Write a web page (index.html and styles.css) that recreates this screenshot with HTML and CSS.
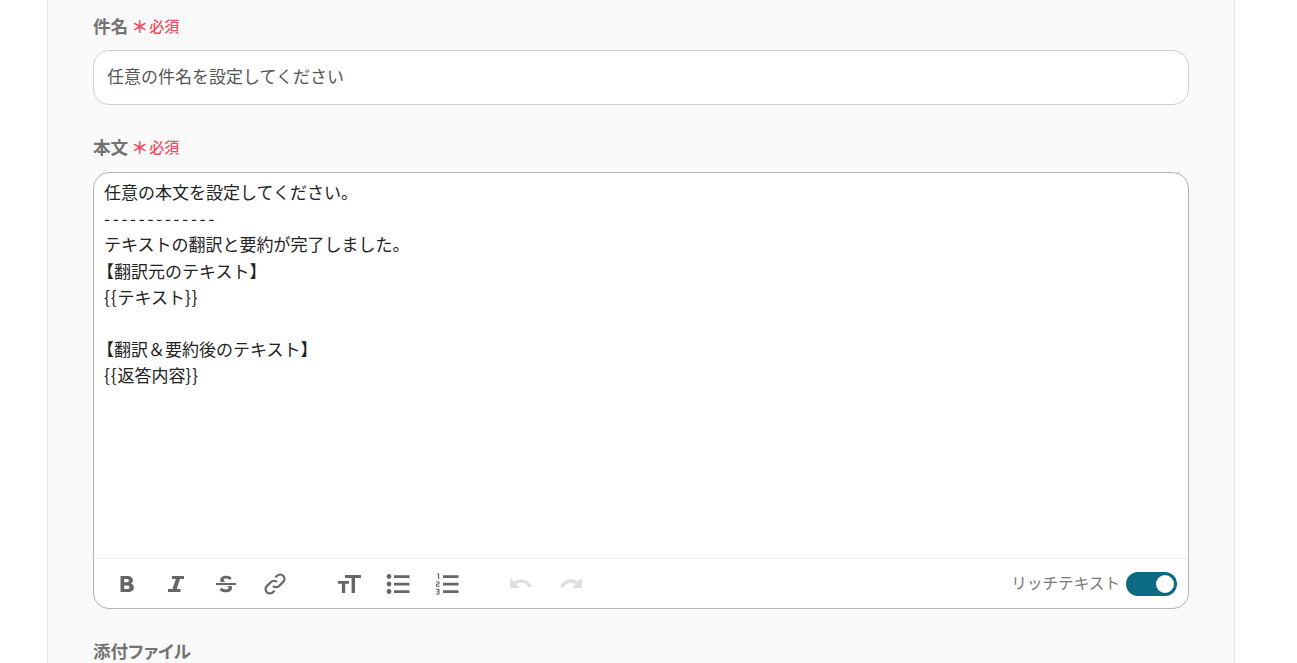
FILE: index.html
```html
<!DOCTYPE html>
<html lang="ja">
<head>
  <meta charset="UTF-8">
  <meta name="viewport" content="width=device-width, initial-scale=1.0">
  <title>メール設定</title>
  <link rel="stylesheet" href="styles.css">
</head>

<body>
  <div class="panel">
    <div class="field field-subject">
      <div class="label">
        <span class="label-name">件名</span>
        <span class="label-mark">＊</span>
        <span class="label-required">必須</span>
      </div>
      <div class="input-box">任意の件名を設定してください</div>
    </div>

    <div class="field field-body">
      <div class="label">
        <span class="label-name">本文</span>
        <span class="label-mark">＊</span>
        <span class="label-required">必須</span>
      </div>
      <div class="editor">
        <div class="editor-text">
          <p>任意の本文を設定してください。</p>
          <p class="dashes">-------------</p>
          <p>テキストの翻訳と要約が完了しました。</p>
          <p class="bracket">【翻訳元のテキスト】</p>
          <p><span class="brace">{{</span>テキスト<span class="brace">}}</span></p>
          <p>&nbsp;</p>
          <p class="bracket">【翻訳＆要約後のテキスト】</p>
          <p><span class="brace">{{</span>返答内容<span class="brace">}}</span></p>
        </div>
        <div class="toolbar">
          <div class="tool-group">
            <svg class="tool" viewBox="0 0 24 24"><path d="M5.500 4h7.200c3.200 0 5.200 1.700 5.200 4.200 0 1.500-.8 2.700-2 3.300 1.800.6 3 2.100 3 4 0 2.800-2.200 4.500-5.500 4.500H5.500zm3.700 6.300h2.700c1.300 0 2-.6 2-1.700s-.7-1.700-2-1.700H9.200zm0 6.800h3.100c1.400 0 2.200-.6 2.200-1.800 0-1.200-.8-1.900-2.200-1.900H9.200z"/></svg>
            <svg class="tool" viewBox="0 0 24 24"><path d="M8 4h12v3h-4l-3.300 10H16.500v3H4v-3h4.500L11.800 7H8z"/></svg>
            <svg class="tool" viewBox="0 0 24 24"><path d="M2 11h20v2H2z"/><path d="M6.800 10c-.4-.6-.6-1.300-.6-2 0-2.600 2.400-4.300 5.900-4.300 2.400 0 4.300.7 5.700 2.100l-2 2.200c-1-.9-2.300-1.400-3.700-1.400-1.500 0-2.400.5-2.400 1.300 0 .9.800 1.400 2 2.100zM17.600 14c.2.500.4 1 .4 1.700 0 2.800-2.500 4.600-6.100 4.600-2.600 0-4.800-.8-6.300-2.400l2.100-2.200c1.100 1.100 2.700 1.700 4.200 1.700 1.700 0 2.700-.6 2.700-1.600 0-.8-.6-1.400-2-1.800z"/></svg>
            <svg class="tool tool-link" viewBox="0 0 24 24"><path d="M10 14a4.300 4.300 0 0 0 6.100 0l4.100-4.100a4.300 4.300 0 0 0-6.100-6.100l-1.600 1.600"/><path d="M14 10a4.300 4.300 0 0 0-6.100 0l-4.100 4.100a4.300 4.300 0 0 0 6.100 6.100l1.600-1.600"/></svg>
          </div>
          <div class="tool-group">
            <svg class="tool" viewBox="0 0 24 24"><path d="M8 3h16v3h-6v15h-3.400V6H8z"/><path d="M1 9h11v2.800H8.200V21H4.900v-9.200H1z"/></svg>
            <svg class="tool" viewBox="0 0 24 24"><circle cx="3" cy="4.500" r="2.400"/><circle cx="3" cy="12" r="2.400"/><circle cx="3" cy="19.500" r="2.400"/><path d="M8 3.200h15.500v2.700H8zM8 10.700h15.500v2.700H8zM8 18.200h15.500v2.700H8z"/></svg>
            <svg class="tool" viewBox="0 0 24 24"><path d="M8 3.200h15.500v2.700H8zM8 10.700h15.500v2.700H8zM8 18.200h15.500v2.700H8z"/><path d="M2 1.500h2.200v5.500H3V2.500H2zM1 9.500h3.500v3H2.200v1.300h2.300v1H1V11.700h2.300v-1.300H1zM1 17h3.500v5.500H1v-1h2.300v-1.300H1.800v-1h1.500v-1.200H1z"/></svg>
          </div>
          <div class="tool-group tool-group-off">
            <svg class="tool" viewBox="-1 0 24 24"><path d="M0 6v10h10l-3.700-3.700c1.400-1 3-1.600 4.700-1.600 3.500 0 6.400 2 7.700 5l3.300-1.100C20.200 10.300 16 7.200 11 7.200c-2.500 0-4.900.9-6.700 2.400z"/></svg>
            <svg class="tool" viewBox="1 0 24 24"><path d="M24 6v10H14l3.700-3.700c-1.400-1-3-1.600-4.700-1.600-3.500 0-6.400 2-7.700 5L2 14.600C3.800 10.300 8 7.200 13 7.200c2.500 0 4.900.9 6.700 2.400z"/></svg>
          </div>
          <div class="rich-switch">
            <span class="rich-label">リッチテキスト</span>
            <span class="toggle"><span class="toggle-knob"></span></span>
          </div>
        </div>
      </div>
    </div>

    <div class="field field-attach">
      <div class="label">
        <span class="label-name">添付ファイル</span>
      </div>
    </div>
  </div>
</body>
</html>
```

FILE: styles.css
```css
* {
  box-sizing: border-box;
  padding: 0;
  margin: 0;
}
html, body {
  height: 663px;
  overflow: hidden;
  background-color: #fff;
  font-family: "Noto Sans CJK JP", "Noto Sans", sans-serif;
}
.panel {
  width: 1188px;
  height: 663px;
  margin-left: 47px;
  padding: 13px 45px 0;
  background-color: #fafafa;
  border-left: 1px solid #e6e6e6;
  border-right: 1px solid #e6e6e6;
  overflow: hidden;
}
.field-body {
  margin-top: 29px;
}
.field-attach {
  margin-top: 32px;
}
.label {
  display: flex;
  align-items: center;
  height: 26px;
  font-size: 17.6px;
  line-height: 26px;
  font-weight: 700;
  color: #737373;
}
.field-attach .label {
  height: 20px;
  line-height: 20px;
  font-feature-settings: "palt";
}
.label-mark {
  margin-left: 3px;
  width: 17px;
  text-align: center;
  font-size: 17px;
  font-weight: 700;
  color: #ed4d63;
}
.label-required {
  margin-left: 1px;
  font-size: 15px;
  font-weight: 500;
  color: #ed4d63;
}
.input-box {
  height: 55px;
  margin-top: 11px;
  padding: 0 13px;
  background-color: #fff;
  border: 1px solid #ccd0d5;
  border-radius: 16px;
  font-size: 17px;
  line-height: 49px;
  color: #555;
}
.field-body .label {
  margin-bottom: 12px;
}
.editor {
  height: 437px;
  display: flex;
  flex-direction: column;
  background-color: #fff;
  border: 1px solid #b4b4b4;
  border-radius: 16px;
  overflow: hidden;
}
.editor-text {
  flex: 1;
  padding: 6px 10px 0;
  font-size: 17px;
  line-height: 26.2px;
  color: #222;
}
.dashes {
  letter-spacing: 2.8px;
}
.bracket {
  text-indent: -7px;
}
.brace {
  letter-spacing: 1px;
}
.toolbar {
  height: 50px;
  display: flex;
  align-items: center;
  padding: 0 11px 0 21px;
  border-top: 1px solid #f0f0f0;
}
.tool-group {
  display: flex;
  gap: 25.3px;
  margin-right: 50px;
}
.tool {
  width: 24px;
  height: 24px;
  fill: #666;
}
.tool-link {
  fill: none;
  stroke: #666;
  stroke-width: 2.2;
}
.tool-group-off {
  margin-right: 0;
}
.tool-group-off .tool {
  fill: #dedede;
}
.rich-switch {
  margin-left: auto;
  display: flex;
  align-items: center;
  gap: 6px;
}
.rich-label {
  margin-bottom: 3px;
  font-size: 15.6px;
  color: #777;
}
.toggle {
  width: 51px;
  height: 24px;
  display: flex;
  align-items: center;
  justify-content: flex-end;
  padding-right: 3px;
  background-color: #0c6a82;
  border-radius: 12px;
}
.toggle-knob {
  width: 18px;
  height: 18px;
  background-color: #fff;
  border-radius: 50%;
}
```
